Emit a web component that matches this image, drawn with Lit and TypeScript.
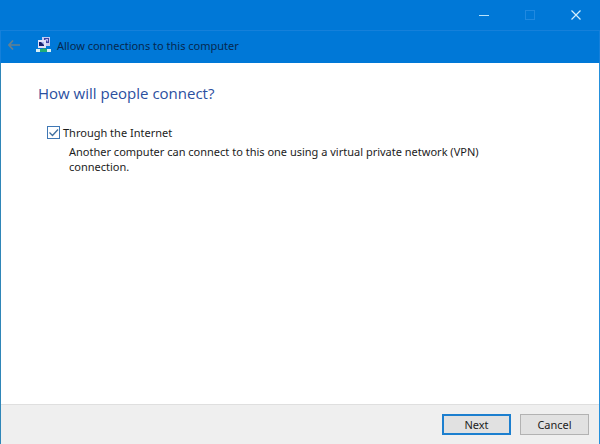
import { LitElement, html, css } from "lit";
import { customElement, state } from "lit/decorators.js";

@customElement("app-root")
export class AppRoot extends LitElement {
  @state() private internet = true;

  static styles = css`
    :host {
      display: flex;
      flex-direction: column;
      min-height: 100vh;
      box-sizing: border-box;
      background: #0078d7;
      color: #1c1c1c;
      font: 11px/15px "Noto Sans", "Open Sans", sans-serif;
    }
    * {
      box-sizing: border-box;
    }
    button {
      font: inherit;
      color: inherit;
      margin: 0;
      padding: 0;
    }
    svg {
      display: block;
    }
    .caption {
      display: flex;
      justify-content: flex-end;
      height: 30px;
      padding-right: 1px;
    }
    .caption button {
      display: flex;
      align-items: center;
      justify-content: center;
      width: 46px;
      border: 0;
      background: none;
    }
    .header {
      display: flex;
      align-items: center;
      gap: 16px;
      height: 33px;
      padding: 0 7px 4px;
      border: 1px solid #1580da;
      border-bottom: 0;
    }
    .header,
    .caption {
      flex: none;
    }
    .back {
      border: 0;
      background: none;
    }
    .title {
      display: flex;
      align-items: center;
      gap: 5px;
      margin: 0;
      font-size: 11px;
      font-weight: 400;
      color: #06284f;
    }
    .body {
      flex: 1;
      display: flex;
      flex-direction: column;
      border-left: 1px solid #2f86b8;
      border-right: 1px solid #2590dc;
    }
    .content {
      flex: 1;
      padding: 20px 37px;
      background: #fff;
    }
    h2 {
      margin: 0 0 22px;
      font-family: "Open Sans", "Noto Sans", sans-serif;
      font-size: 15px;
      line-height: 20px;
      font-weight: 400;
      color: #2b4fa0;
    }
    .option {
      display: flex;
      align-items: center;
      gap: 3px;
      padding-left: 9px;
    }
    .box {
      display: grid;
      width: 13px;
      height: 13px;
    }
    .box input,
    .box svg {
      grid-area: 1 / 1;
    }
    .box input {
      appearance: none;
      width: 13px;
      height: 13px;
      margin: 0;
      border: 1px solid #3f78b5;
      background: #fff;
    }
    .box svg {
      pointer-events: none;
      z-index: 1;
    }
    .box input:not(:checked) + svg {
      visibility: hidden;
    }
    .hint {
      max-width: 456px;
      margin: 4px 0 0;
      padding-left: 31px;
    }
    .footer {
      display: flex;
      justify-content: flex-end;
      gap: 9px;
      height: 40px;
      padding: 9px 10px;
      background: #efefef;
      border-top: 1px solid #dfdfdf;
    }
    .footer button {
      width: 69px;
      height: 21px;
      border: 1px solid #b2b2b2;
      background: #e1e1e1;
    }
    .footer .primary {
      border: 2px solid #1c7fcf;
    }
  `;

  render() {
    return html`
      <div class="caption">
        <button aria-label="Minimize">
          <svg width="10" height="10"><path d="M0 5.5H10" stroke="#b9e3fb" /></svg>
        </button>
        <button aria-label="Maximize" disabled>
          <svg width="10" height="10"><rect x=".5" y=".5" width="9" height="9" fill="none" stroke="#2089e0" /></svg>
        </button>
        <button aria-label="Close">
          <svg width="10" height="10"><path d="M.5.5l9 9M9.500.5l-9 9" stroke="#d3effd" stroke-width="1.200" /></svg>
        </button>
      </div>
      <header class="header">
        <button class="back" aria-label="Back" disabled>
          <svg width="12" height="10"><path d="M5 .5L1 5l4 4.500M1 5H12" fill="none" stroke="#66808f" stroke-width="1.700" /></svg>
        </button>
        <h1 class="title">
          <svg width="16" height="16" viewBox="0 0 16 16" aria-hidden="true">
            <rect x="6" y="0" width="8" height="9" fill="#c6c9f0" />
            <rect x="8" y="1" width="5" height="5" fill="#3c40a4" />
            <path d="M9 2h3v3z" fill="#b4bcf0" />
            <rect x="2" y="3" width="8" height="8" fill="#dfe0f8" />
            <rect x="3" y="5" width="5" height="4" fill="#17206f" />
            <path d="M5 5h3v3z" fill="#a9b4ee" />
            <path d="M7 11h2v1H7z" fill="#2b9a6d" />
            <rect x="0" y="12" width="15" height="3" fill="#d8eff2" />
            <rect x="4" y="12" width="7" height="3" fill="#20ad78" />
          </svg>
          Allow connections to this computer
        </h1>
      </header>
      <div class="body">
        <main class="content">
          <h2>How will people connect?</h2>
          <div class="option">
            <span class="box">
              <input
                id="internet"
                type="checkbox"
                aria-describedby="hint"
                .checked=${this.internet}
                @change=${(e: Event) => (this.internet = (e.target as HTMLInputElement).checked)}
              />
              <svg width="13" height="13"><path d="M2.500 6.500l3 3 5.500-6" fill="none" stroke="#3f6f9f" stroke-width="1.300" /></svg>
            </span>
            <label for="internet">Through the Internet</label>
          </div>
          <p class="hint" id="hint">
            Another computer can connect to this one using a virtual private network (VPN) connection.
          </p>
        </main>
        <footer class="footer">
          <button class="primary">Next</button>
          <button>Cancel</button>
        </footer>
      </div>
    `;
  }
}
